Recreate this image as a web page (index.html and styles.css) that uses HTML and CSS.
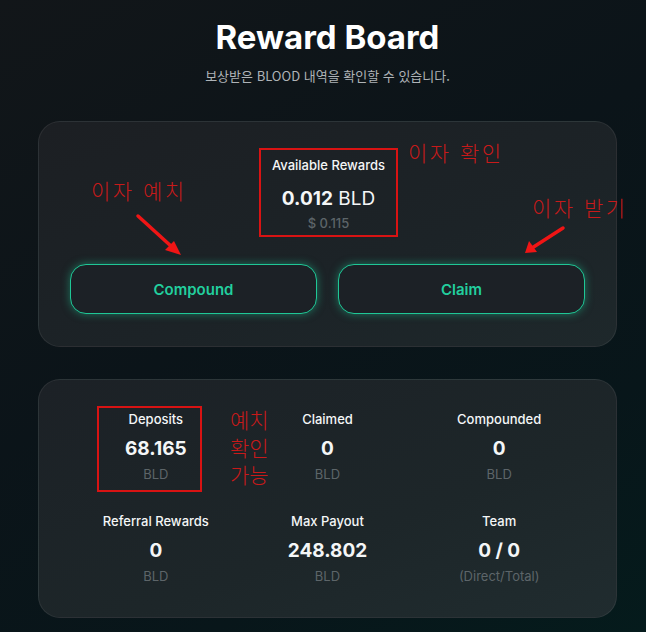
FILE: index.html
```html
<!doctype html>
<html lang="ko">
<head>
    <meta charset="UTF-8">
    <meta name="viewport" content="width=device-width, initial-scale=1.0">
    <title>Reward Board</title>
    <link rel="stylesheet" href="styles.css">
</head>
<body>
<div class="board">
    <h1 class="board_title">Reward Board</h1>
    <p class="board_sub">보상받은 BLOOD 내역을 확인할 수 있습니다.</p>

    <div class="card card_rewards">
        <div class="reward">
            <div class="reward_label">Available Rewards</div>
            <div class="reward_value"><b>0.012</b> BLD</div>
            <div class="reward_price">$ 0.115</div>
        </div>
        <div class="actions">
            <button class="action_btn">Compound</button>
            <button class="action_btn">Claim</button>
        </div>

        <span class="note note_compound">이자 예치</span>
        <span class="note note_check">이자 확인</span>
        <span class="note note_claim">이자 받기</span>
        <svg class="arrow arrow_compound" width="60" height="60" viewBox="0 0 60 60">
            <line x1="6" y1="6" x2="40" y2="37"/>
            <polygon points="49,45 33,40 42,31"/>
        </svg>
        <svg class="arrow arrow_claim" width="60" height="40" viewBox="0 0 60 40">
            <line x1="50" y1="6" x2="19" y2="26"/>
            <polygon points="12,31 16,19 24,30"/>
        </svg>
    </div>

    <div class="card card_stats">
        <div class="stats">
            <div class="stat">
                <div class="stat_label">Deposits</div>
                <div class="stat_value">68.165</div>
                <div class="stat_unit">BLD</div>
            </div>
            <div class="stat">
                <div class="stat_label">Claimed</div>
                <div class="stat_value">0</div>
                <div class="stat_unit">BLD</div>
            </div>
            <div class="stat">
                <div class="stat_label">Compounded</div>
                <div class="stat_value">0</div>
                <div class="stat_unit">BLD</div>
            </div>
            <div class="stat">
                <div class="stat_label">Referral Rewards</div>
                <div class="stat_value">0</div>
                <div class="stat_unit">BLD</div>
            </div>
            <div class="stat">
                <div class="stat_label">Max Payout</div>
                <div class="stat_value">248.802</div>
                <div class="stat_unit">BLD</div>
            </div>
            <div class="stat">
                <div class="stat_label">Team</div>
                <div class="stat_value">0 / 0</div>
                <div class="stat_unit">(Direct/Total)</div>
            </div>
        </div>

        <div class="mark mark_deposits"></div>
        <div class="note note_deposits">
            <span>예치</span>
            <span>확인</span>
            <span>가능</span>
        </div>
    </div>
</div>
</body>
</html>
```

FILE: styles.css
```css
* {
    box-sizing: border-box;
    padding: 0;
    margin: 0;
}

html,
body {
    min-height: 100vh;
}

body {
    padding-left: 9px;
    background: linear-gradient(150deg, #121619 0%, #0b1419 45%, #08161a 75%, #051b1c 100%);
    font-family: Inter, "Noto Sans", sans-serif;
    color: #f4f6f7;
}

.board {
    width: 579px;
    margin: 0 auto;
    padding-top: 17px;
}

.board_title {
    text-align: center;
    font-size: 33px;
    line-height: 40px;
    font-weight: 700;
    color: #ffffff;
}

.board_sub {
    margin-top: 10px;
    text-align: center;
    font-family: "Noto Sans CJK KR", sans-serif;
    font-size: 13px;
    line-height: 18px;
    color: #aeb3b7;
}

.card {
    position: relative;
    border: 1px solid rgba(255, 255, 255, 0.07);
    border-radius: 22px;
    background: linear-gradient(160deg, #1c1f23 0%, #1c2327 60%, #1e282b 100%);
}

.card_rewards {
    margin-top: 36px;
    padding: 26px 31px 32px;
}

.card_stats {
    margin-top: 32px;
    padding: 30px 31px 32px;
    background: linear-gradient(160deg, #1c2126 0%, #1d2629 60%, #202c2f 100%);
}

.reward {
    display: flex;
    flex-direction: column;
    align-items: center;
    width: 139px;
    height: 89px;
    margin: 0 auto;
    padding-top: 6px;
    border: 2px solid #d81313;
    transform: translateX(1px);
}

.reward_label {
    font-size: 13px;
    line-height: 18px;
    font-weight: 500;
}

.reward_value {
    margin-top: 12px;
    font-size: 19px;
    line-height: 26px;
    font-weight: 400;
}

.reward_value b {
    font-weight: 700;
}

.reward_price {
    margin-top: 2px;
    font-size: 13px;
    line-height: 18px;
    font-weight: 500;
    color: #5d6569;
}

.actions {
    display: flex;
    gap: 21px;
    margin-top: 27px;
}

.action_btn {
    flex: 1;
    height: 50px;
    border: 1px solid #1fc796;
    border-radius: 16px;
    background-color: #1c2126;
    box-shadow: 0 0 9px rgba(31, 199, 150, 0.5);
    font-family: Inter, "Noto Sans", sans-serif;
    font-size: 15px;
    font-weight: 600;
    color: #22cf9e;
}

.stats {
    display: grid;
    grid-template-columns: repeat(3, 1fr);
    row-gap: 29px;
}

.stat {
    display: flex;
    flex-direction: column;
    align-items: center;
}

.stat_label {
    font-size: 13px;
    line-height: 18px;
    font-weight: 500;
}

.stat_value {
    margin-top: 10px;
    font-size: 19px;
    line-height: 22px;
    font-weight: 700;
}

.stat_unit {
    margin-top: 5px;
    font-size: 13px;
    line-height: 18px;
    color: #5d6569;
}

/* annotations drawn on top */
.note {
    position: absolute;
    font-family: "Noto Sans CJK KR", sans-serif;
    font-size: 21px;
    line-height: 28px;
    font-weight: 300;
    letter-spacing: 2.5px;
    color: #c81a1a;
    white-space: nowrap;
}

.note_compound {
    left: 52px;
    top: 54px;
}

.note_check {
    left: 369px;
    top: 16px;
}

.note_claim {
    left: 493px;
    top: 71px;
}

.note_deposits {
    display: flex;
    flex-direction: column;
    gap: 8px;
    left: 191px;
    top: 30px;
    font-size: 21px;
    line-height: 19.5px;
    letter-spacing: 0;
}

.mark {
    position: absolute;
    border: 2px solid #d81313;
}

.mark_deposits {
    left: 58px;
    top: 26px;
    width: 105px;
    height: 86px;
}

.arrow {
    position: absolute;
}

.arrow line {
    stroke: #f01515;
    stroke-width: 3.5;
    stroke-linecap: round;
}

.arrow polygon {
    fill: #f01515;
}

.arrow_compound {
    left: 93px;
    top: 88px;
}

.arrow_claim {
    left: 474px;
    top: 100px;
}
```
